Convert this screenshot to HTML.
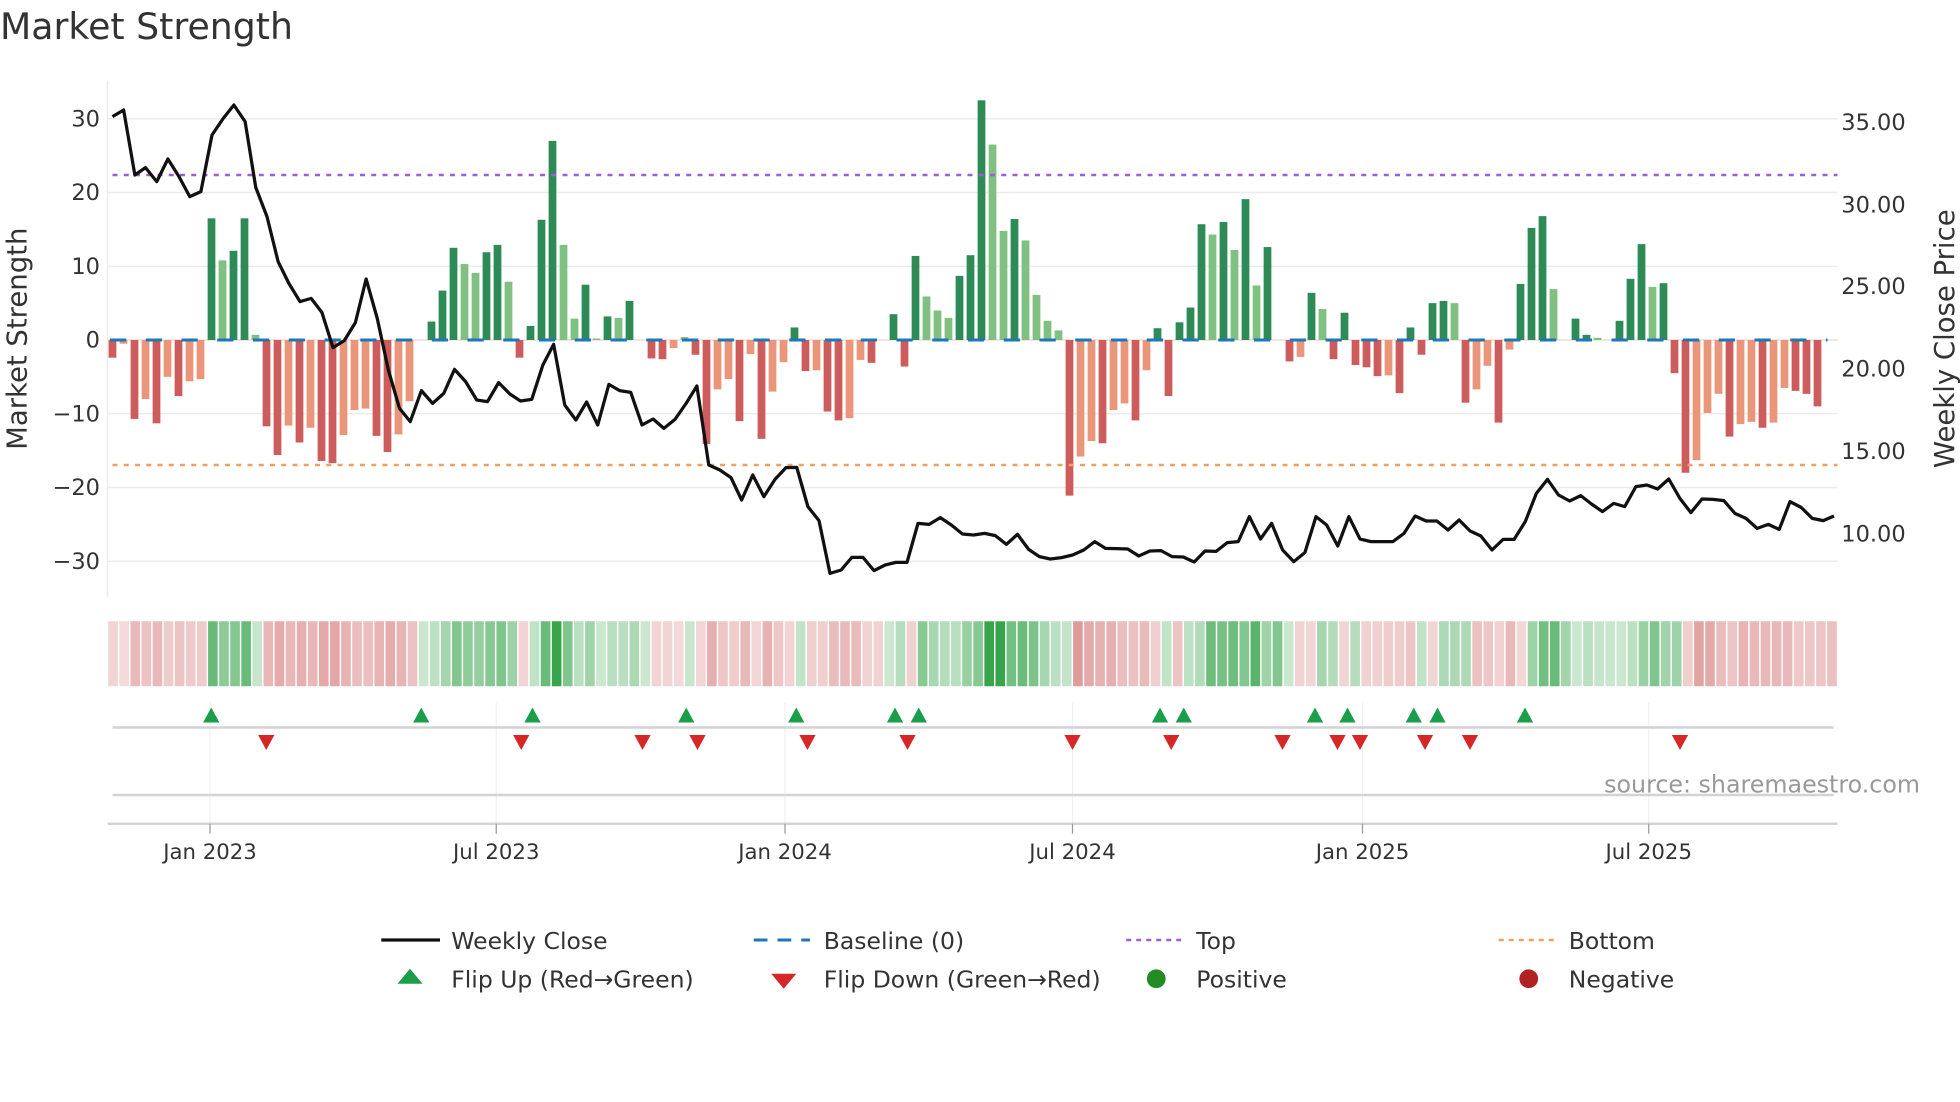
<!DOCTYPE html>
<html><head><meta charset="utf-8">
<style>
html,body{margin:0;padding:0;background:#fff;}
svg{display:block;}
text{font-family:"DejaVu Sans","Liberation Sans",sans-serif;fill:#333;}
</style></head>
<body>
<svg id="s" width="1960" height="1102" viewBox="0 0 1568 881.6" xmlns="http://www.w3.org/2000/svg">
<rect width="1568" height="882" fill="#fff"/>
<text x="0" y="31" font-size="29">Market Strength</text>
<g stroke="#ececf0" stroke-width="1.2">
<line x1="86" x2="1470" y1="95" y2="95"/><line x1="86" x2="1470" y1="154" y2="154"/>
<line x1="86" x2="1470" y1="213" y2="213"/><line x1="86" x2="1470" y1="331" y2="331"/>
<line x1="86" x2="1470" y1="390" y2="390"/><line x1="86" x2="1470" y1="449" y2="449"/>
<line x1="86" x2="86" y1="65" y2="478"/>
</g>
<line x1="86" x2="1470" y1="272" y2="272" stroke="#e8d8d8" stroke-width="1"/>
<g font-size="18" text-anchor="end">
<text x="80" y="101">30</text><text x="80" y="160">20</text><text x="80" y="219">10</text>
<text x="80" y="278">0</text><text x="80" y="337">−10</text><text x="80" y="396">−20</text><text x="80" y="455">−30</text>
</g>
<g font-size="18">
<text x="1473" y="104">35.00</text><text x="1473" y="170">30.00</text><text x="1473" y="235">25.00</text>
<text x="1473" y="301">20.00</text><text x="1473" y="367">15.00</text><text x="1473" y="433">10.00</text>
</g>
<text transform="translate(21,271) rotate(-90)" font-size="22" text-anchor="middle">Market Strength</text>
<text transform="translate(1563,271) rotate(-90)" font-size="22" text-anchor="middle">Weekly Close Price</text>
<g id="bars"></g>
<line x1="88" x2="1462" y1="272" y2="272" stroke="#1f77b4" stroke-width="2.4" stroke-dasharray="13 15.6"/>
<line x1="90" x2="1470" y1="140" y2="140" stroke="#9b5fd6" stroke-width="2" stroke-dasharray="4 5"/>
<line x1="90" x2="1470" y1="372" y2="372" stroke="#f0a060" stroke-width="2" stroke-dasharray="4 5"/>
<polyline id="price" fill="none" stroke="#111" stroke-width="2.6" stroke-linejoin="round"/>
<g id="heat"></g>
<g stroke="#f0f0f0" stroke-width="1">
<line x1="168" x2="168" y1="562" y2="659"/><line x1="397" x2="397" y1="562" y2="659"/>
<line x1="628" x2="628" y1="562" y2="659"/><line x1="858" x2="858" y1="562" y2="659"/>
<line x1="1090" x2="1090" y1="562" y2="659"/><line x1="1319" x2="1319" y1="562" y2="659"/>
</g>
<line x1="90" x2="1467" y1="582" y2="582" stroke="#d3d3d3" stroke-width="2"/>
<line x1="90" x2="1467" y1="636" y2="636" stroke="#d3d3d3" stroke-width="2"/>
<line x1="86" x2="1470" y1="659" y2="659" stroke="#d3d3d3" stroke-width="2"/>
<g stroke="#999" stroke-width="1">
<line x1="168" x2="168" y1="659" y2="667"/><line x1="397" x2="397" y1="659" y2="667"/>
<line x1="628" x2="628" y1="659" y2="667"/><line x1="858" x2="858" y1="659" y2="667"/>
<line x1="1090" x2="1090" y1="659" y2="667"/><line x1="1319" x2="1319" y1="659" y2="667"/>
</g>
<g id="flips"></g>
<text x="1536" y="634" font-size="19" text-anchor="end" style="fill:#999">source: sharemaestro.com</text>
<g font-size="17" text-anchor="middle">
<text x="168" y="687">Jan 2023</text><text x="397" y="687">Jul 2023</text><text x="628" y="687">Jan 2024</text>
<text x="858" y="687">Jul 2024</text><text x="1090" y="687">Jan 2025</text><text x="1319" y="687">Jul 2025</text>
</g>
<line x1="305" x2="352" y1="752" y2="752" stroke="#111" stroke-width="2.6"/>
<line x1="603" x2="648" y1="752" y2="752" stroke="#1f77b4" stroke-width="2.4" stroke-dasharray="11 8"/>
<line x1="901" x2="946" y1="752" y2="752" stroke="#9b5fd6" stroke-width="2" stroke-dasharray="4 4"/>
<line x1="1199" x2="1244" y1="752" y2="752" stroke="#f0a060" stroke-width="2" stroke-dasharray="4 4"/>
<polygon points="328,775 338,787 318,787" fill="#1a9e4a"/>
<polygon points="617,779 637,779 627,791" fill="#d62728"/>
<circle cx="925" cy="783" r="7.5" fill="#228b22"/>
<circle cx="1223" cy="783" r="7.5" fill="#b22222"/>
<g font-size="18.8">
<text x="361" y="759">Weekly Close</text><text x="659" y="759">Baseline (0)</text>
<text x="957" y="759">Top</text><text x="1255" y="759">Bottom</text>
<text x="361" y="790">Flip Up (Red→Green)</text><text x="659" y="790">Flip Down (Green→Red)</text>
<text x="957" y="790">Positive</text><text x="1255" y="790">Negative</text>
</g>
</svg>
<script>
var NS="http://www.w3.org/2000/svg";
var V=[-2.4,-0.5,-10.7,-8,-11.3,-5,-7.6,-5.6,-5.3,16.5,10.8,12.1,16.5,0.7,-11.7,-15.6,-11.6,-13.9,-11.9,-16.4,-16.7,-12.9,-9.5,-9.3,-13,-15.2,-12.8,-8.3,0,2.5,6.7,12.5,10.3,9.1,11.9,12.9,7.9,-2.4,1.9,16.3,27,12.9,2.9,7.5,0.2,3.2,3,5.3,0,-2.5,-2.6,-1.1,0.4,-2,
-14.1,-6.7,-5.3,-11,-1.9,-13.4,-7,-3,1.7,-4.2,-4.1,-9.7,-10.9,-10.6,-2.7,-3.1,0,3.5,-3.6,11.4,5.9,4,3,8.7,11.5,32.5,26.5,14.8,16.4,13.5,6.1,2.6,1.3,-21.1,-15.8,-13.7,-14,-9.5,-8.6,-10.9,-4.1,1.6,-7.6,2.4,4.4,15.7,14.3,16,12.2,19.1,7.4,12.6,0,
-2.9,-2.3,6.4,4.2,-2.6,3.7,-3.4,-3.7,-4.9,-4.8,-7.2,1.7,-2,5,5.3,5,-8.5,-6.7,-3.5,-11.2,-1.3,7.6,15.2,16.8,6.9,0,2.9,0.7,0.3,0,2.6,8.3,13,7.2,7.7,-4.5,-18,-16.3,-9.9,-7.3,-13.1,-11.4,-11.1,-11.9,-11.2,-6.5,-6.9,-7.3,-9];
var F="dldldldlld"+"lddlddldld"+"dlllddllld"+"ddllddlddd"+"dlldldldld"+"dlld"+
"dlldldlldd"+"lddlldlddd"+"llldddlldl"+"llldlldlld"+"ldddddldld"+"ldl"+
"dldldddddl"+"dddddldlld"+"ldddllddll"+"dddldddlll"+"dlldllddd";
var bars=document.getElementById("bars"),heat=document.getElementById("heat");
for(var i=0;i<V.length;i++){
 var v=V[i],cx=90+8.8*i,d=F[i]=="d";
 if(Math.abs(v)>0.05){
  var r=document.createElementNS(NS,"rect");
  var h=Math.abs(v)*5.9;
  r.setAttribute("x",cx-3.1);r.setAttribute("width",6.2);
  r.setAttribute("y",v>0?272-h:272);r.setAttribute("height",h);
  r.setAttribute("fill",v>0?(d?"#2e8b57":"#80c080"):(d?"#cd5c5c":"#e9967a"));
  bars.appendChild(r);
 }
 var c=document.createElementNS(NS,"rect");
 c.setAttribute("x",86+8.872*i+0.6);c.setAttribute("width",7.7);c.setAttribute("y",497);c.setAttribute("height",52);
 var t=Math.min(Math.abs(v)/25,1),a,col;
 if(v>=0){a=0.25+0.7*t;col=[46,160,67];}else{a=0.2+0.45*t;col=[200,80,80];}
 var rr=Math.round(255+(col[0]-255)*a),gg=Math.round(255+(col[1]-255)*a),bb=Math.round(255+(col[2]-255)*a);
 c.setAttribute("fill","rgb("+rr+","+gg+","+bb+")");
 heat.appendChild(c);
}
var p1=[[252,110],[277,90],[302,285],[326,263],[351,305],[376,237],[401,290],[425,350],[450,335],[475,165],[500,115],[524,75],[549,125],[573,322],[598,410],[623,545],[647,610],[672,665],[697,655],[721,697],[746,803],[771,782],[796,728],[820,597],[845,715],[870,870],[895,985],[919,1025],[944,932],[969,970],[994,940],[1018,868],[1043,905],[1068,960],[1092,965],[1117,908],[1142,942],[1166,963],[1191,958],[1216,855],[1240,793],[1265,975],[1290,1020],[1314,966],[1339,1035],[1364,913],[1388,932],[1413,937],[1438,1035],[1463,1017],[1487,1045],[1512,1018],[1537,970],[1561,918]];
var p3=[[49,1155],[78,1170],[107,1193],[135,1260],[164,1185],[193,1250],[222,1198],[251,1163],[279,1162],[308,1280],[337,1322],[366,1480],[395,1470],[423,1432],[452,1432],[481,1472],[510,1455],[538,1447],[567,1447],[596,1330],[625,1333],[654,1313],[683,1335],[712,1362],[741,1365],[770,1360],[798,1367],[827,1393],[856,1363],[885,1408],[913,1430],[942,1437],[971,1433],[1000,1425],[1029,1410],[1058,1385],[1086,1405],[1115,1406],[1144,1407],[1173,1428],[1202,1413],[1231,1412],[1260,1430],[1289,1431],[1318,1446],[1346,1413],[1375,1414],[1404,1388],[1433,1385],[1462,1310],[1491,1377],[1520,1330],[1549,1410]];
var p4=[[36,1445],[65,1418],[94,1310],[122,1335],[151,1398],[180,1310],[209,1377],[238,1385],[266,1385],[295,1385],[324,1360],[353,1308],[382,1323],[410,1323],[439,1350],[468,1320],[497,1353],[525,1368],[554,1410],[583,1378],[612,1378],[641,1325],[670,1240],[699,1198],[728,1245],[757,1263],[786,1247],[814,1272],[843,1295],[872,1270],[901,1280],[930,1220],[959,1215],[987,1227],[1016,1197],[1045,1255],[1074,1298],[1103,1257],[1132,1258],[1160,1262],[1189,1300],[1218,1315],[1247,1345],[1276,1333],[1305,1348],[1333,1265],[1362,1282],[1391,1315],[1420,1322],[1448,1308]];
var pts=[];
p1.forEach(function(p){pts.push((p[0]/2.8).toFixed(1)+","+(64+p[1]/3.75).toFixed(1));});
p3.forEach(function(p){pts.push((552+p[0]/3.267).toFixed(1)+","+(64+p[1]/3.75).toFixed(1));});
p4.forEach(function(p){pts.push((1024+p[0]/3.267).toFixed(1)+","+(64+p[1]/3.75).toFixed(1));});
document.getElementById("price").setAttribute("points",pts.join(" "));
var fl=document.getElementById("flips");
[169,337,426,549,637,716,735,928,947,1052,1078,1131,1150,1220].forEach(function(x){
 var t=document.createElementNS(NS,"polygon");t.setAttribute("points",x+",566 "+(x+6.5)+",578 "+(x-6.5)+",578");t.setAttribute("fill","#1a9e4a");fl.appendChild(t);});
[213,417,514,558,646,726,858,937,1026,1070,1088,1140,1176,1344].forEach(function(x){
 var t=document.createElementNS(NS,"polygon");t.setAttribute("points",(x-6.5)+",588 "+(x+6.5)+",588 "+x+",600");t.setAttribute("fill","#d62728");fl.appendChild(t);});
</script>
</body></html>
